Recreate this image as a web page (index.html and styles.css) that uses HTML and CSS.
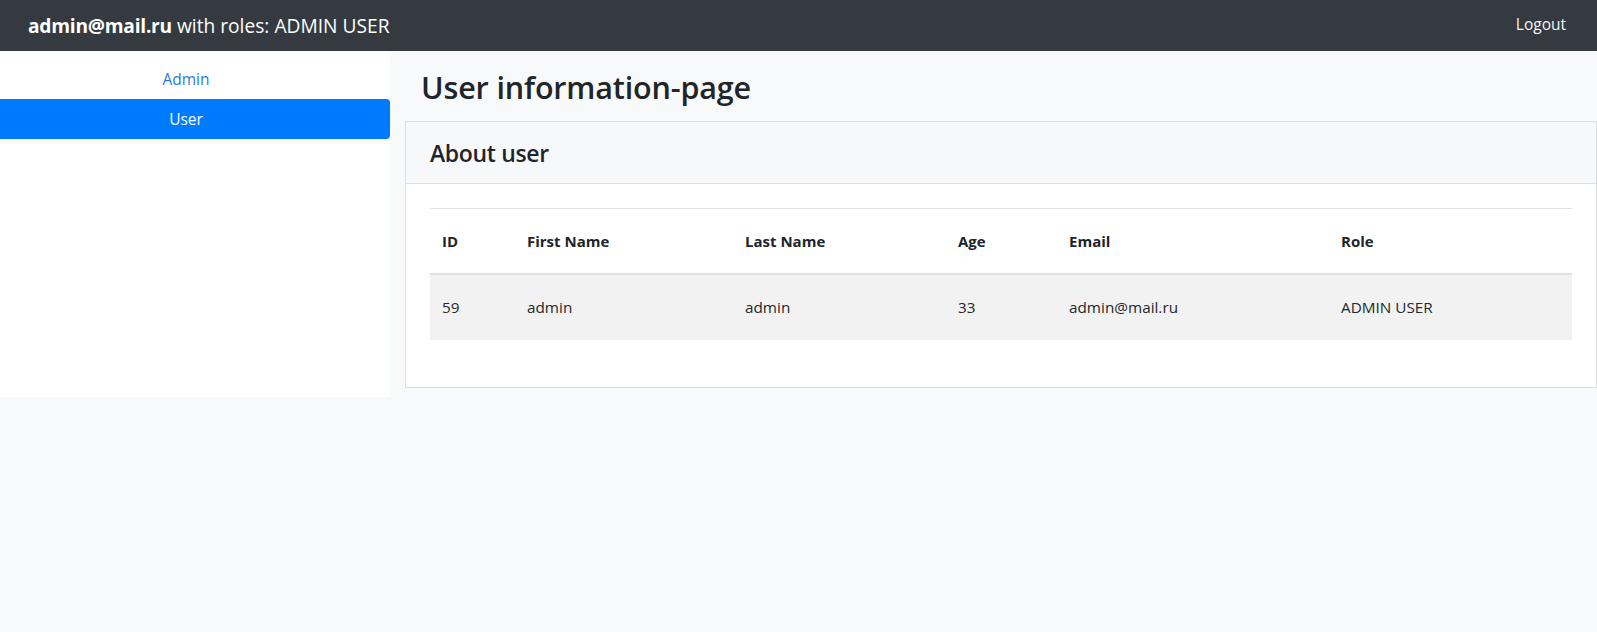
FILE: index.html
```html
<!DOCTYPE html>
<html lang="en">
<head>
<meta charset="utf-8">
<title>User information-page</title>
<link rel="stylesheet" href="styles.css">
</head>
<body>
<header class="navbar">
  <div class="brand"><b>admin@mail.ru</b> with roles: ADMIN USER</div>
  <a class="logout" href="#">Logout</a>
</header>
<div class="layout">
  <nav class="sidebar">
    <a class="pill" href="#">Admin</a>
    <a class="pill active" href="#">User</a>
  </nav>
  <main class="main">
    <h2 class="page-title">User information-page</h2>
    <section class="card">
      <div class="card-header"><h4 class="card-title">About user</h4></div>
      <div class="card-body">
        <table class="table">
          <colgroup>
            <col class="c-id"><col class="c-first"><col class="c-last"><col class="c-age"><col class="c-email"><col class="c-role">
          </colgroup>
          <thead>
            <tr><th>ID</th><th>First Name</th><th>Last Name</th><th>Age</th><th>Email</th><th>Role</th></tr>
          </thead>
          <tbody>
            <tr><td>59</td><td>admin</td><td>admin</td><td>33</td><td>admin@mail.ru</td><td>ADMIN USER</td></tr>
          </tbody>
        </table>
      </div>
    </section>
  </main>
</div>
</body>
</html>
```
FILE: styles.css
```css
* { box-sizing: border-box; }
html, body { margin: 0; padding: 0; }
body {
  font-family: "Open Sans", "Noto Sans", sans-serif;
  font-size: 15.5px;
  line-height: 24px;
  color: #212529;
  background: #f8f9fa;
}
a { text-decoration: none; }

.navbar {
  height: 51px;
  background: #343a40;
  display: flex;
  align-items: center;
  justify-content: space-between;
  padding: 0 31px 0 28px;
}
.brand {
  color: #fff;
  font-size: 19.2px;
  line-height: 30px;
  margin-top: 1px;
}
.brand b { font-weight: 700; letter-spacing: -0.25px; }
.logout {
  color: #f4f5f6;
  font-size: 15.5px;
  line-height: 24px;
  margin-top: -3px;
}

.layout {
  display: flex;
  align-items: stretch;
}
.sidebar {
  width: 390px;
  flex: none;
  background: #fff;
  padding-top: 8px;
  display: flex;
  flex-direction: column;
}
.pill {
  display: block;
  height: 40px;
  line-height: 40px;
  text-align: center;
  padding-right: 18px;
  color: #2a7ade;
  font-size: 15.5px;
}
.pill.active {
  background: #007bff;
  color: #fff;
  border-radius: 0 4px 4px 0;
}

.main {
  flex: 1;
  min-width: 0;
  padding: 0 0 9px 15px;
}
.page-title {
  margin: 17px 0 15px;
  padding-left: 16px;
  font-size: 30.5px;
  line-height: 38px;
  font-weight: 600;
  letter-spacing: -0.15px;
  color: #212529;
}
.card {
  background: #fff;
  border: 1px solid #dcdedf;
}
.card-header {
  height: 62px;
  background: #f7f8f9;
  border-bottom: 1px solid #dcdedf;
  display: flex;
  align-items: center;
  padding: 0 24px;
}
.card-title {
  margin: 0;
  font-size: 23px;
  line-height: 28px;
  font-weight: 600;
  letter-spacing: -0.35px;
  color: #212529;
}
.card-body {
  padding: 24px 24px 47px;
}
.table {
  width: 100%;
  border-collapse: collapse;
  table-layout: fixed;
  border-top: 1px solid #dee2e6;
}
.c-id { width: 85px; }
.c-first { width: 218px; }
.c-last { width: 213px; }
.c-age { width: 111px; }
.c-email { width: 272px; }
.c-role { width: auto; }
.table th {
  text-align: left;
  font-weight: 700;
  font-size: 15px;
  height: 65px;
  padding: 0 12px;
  border-bottom: 2px solid #dee2e6;
  vertical-align: middle;
}
.table td {
  height: 66px;
  padding: 0 12px;
  vertical-align: middle;
  font-size: 15.3px;
  color: #24282c;
}
.table tbody tr { background: #f2f2f2; }
```
